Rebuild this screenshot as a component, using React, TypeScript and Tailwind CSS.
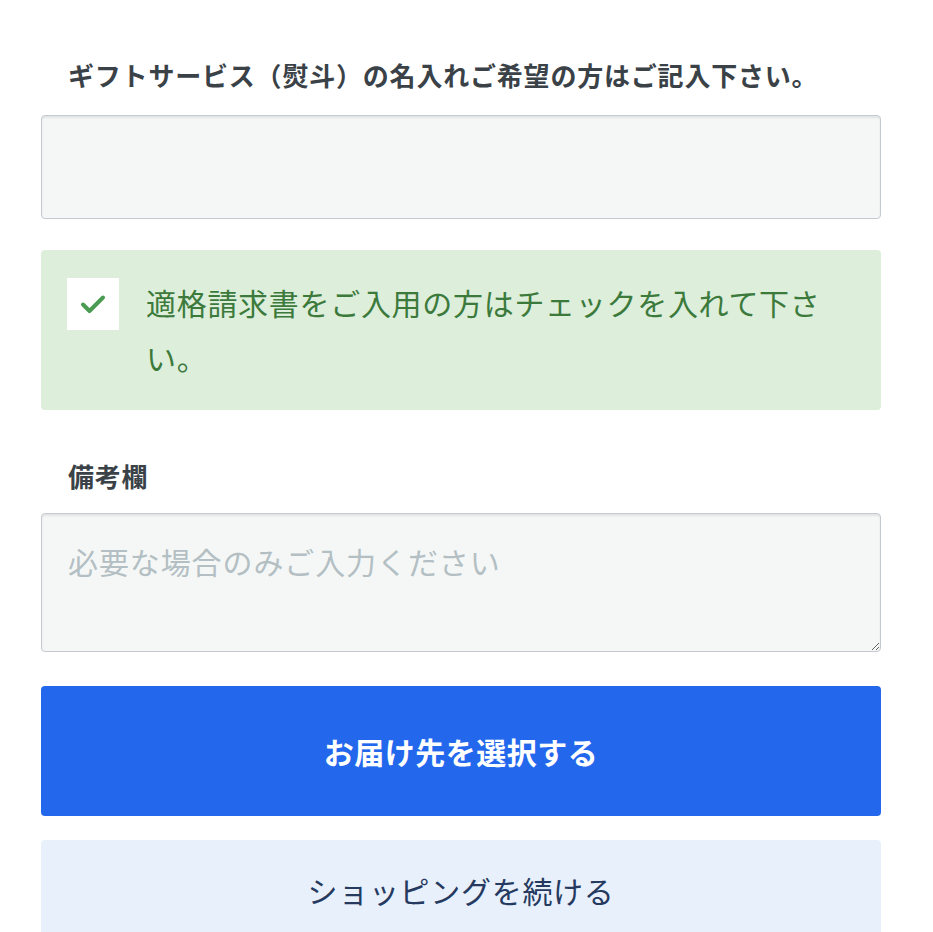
export default function App() {
  const font = { fontFamily: '"Noto Sans CJK JP", "Noto Sans", sans-serif' };
  return (
    <div className="min-h-[932px] bg-white pl-[41px] pr-[52px] pt-[55px]" style={font}>
      <div className="w-[840px]">
        <p className="px-[27px] text-[26px] font-bold leading-[40px] tracking-[0.8px] text-[#3a4248]">
          ギフトサービス（熨斗）の名入れご希望の方はご記入下さい。
        </p>
        <input
          type="text"
          className="mt-[20px] block h-[104px] w-full rounded-[4px] border border-[#c3cbd1] bg-[#f5f7f7] px-[26px] text-[30px] shadow-[inset_0_2px_2px_rgba(0,0,0,0.08)] outline-none"
        />

        <label className="mt-[31px] flex items-start gap-[27px] rounded-[4px] bg-[#ddeedb] px-[26px] pt-[28px] pb-[25px]">
          <span className="flex h-[52px] w-[52px] shrink-0 items-center justify-center bg-white">
            <svg width="26" height="20" viewBox="0 0 26 20" fill="none">
              <path d="M3 10.5l6.5 6.5L23 3.5" stroke="#4a9c52" strokeWidth="4" strokeLinecap="round" strokeLinejoin="round" />
            </svg>
          </span>
          <span className="-mt-[3px] text-[30px] leading-[55px] tracking-[0.7px] text-[#3c7a3c]">
            適格請求書をご入用の方はチェックを入れて下さい。
          </span>
        </label>

        <p className="mt-[46px] px-[27px] text-[26px] font-bold leading-[40px] tracking-[0.8px] text-[#3a4248]">備考欄</p>
        <textarea
          placeholder="必要な場合のみご入力ください"
          className="mt-[17px] block h-[139px] w-full rounded-[4px] border border-[#c3cbd1] bg-[#f5f7f7] px-[26px] pt-[23px] text-[30px] leading-[48px] tracking-[0.9px] shadow-[inset_0_2px_2px_rgba(0,0,0,0.08)] outline-none placeholder:text-[#b3bfc3]"
        />

        <button className="mt-[34px] flex h-[130px] w-full items-center justify-center rounded-[4px] bg-[#2367ec] text-[30px] font-bold tracking-[0.5px] text-white">
          お届け先を選択する
        </button>
        <button className="mt-[24px] flex h-[104px] w-full items-center justify-center rounded-[4px] bg-[#e8f0fc] pb-[4px] text-[30px] tracking-[0.7px] text-[#253a5e]">
          ショッピングを続ける
        </button>
      </div>
    </div>
  );
}
